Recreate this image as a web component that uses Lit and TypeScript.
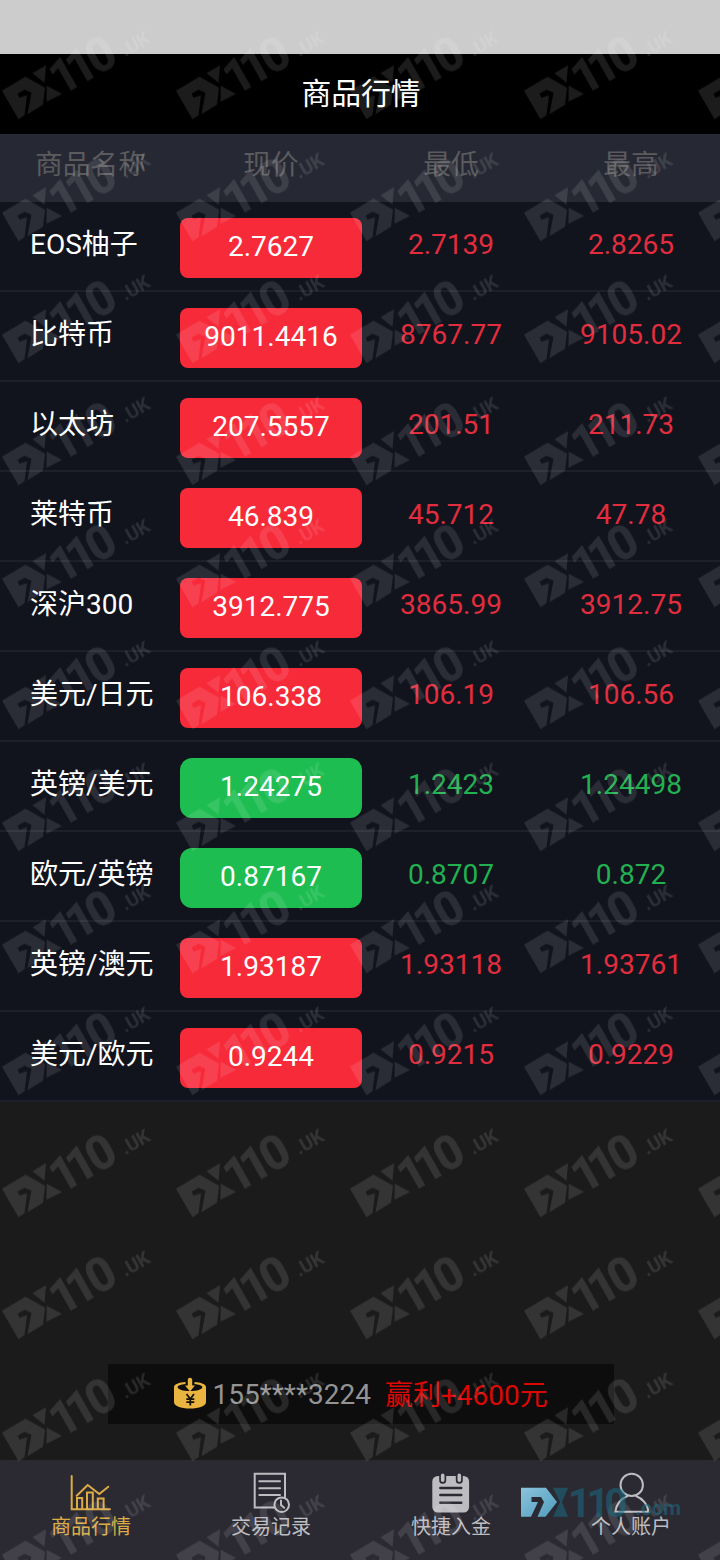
import { LitElement, html, svg, css } from "lit";
import { customElement } from "lit/decorators.js";
import { classMap } from "lit/directives/class-map.js";

type Quote = { name: string; price: string; low: string; high: string; rise: boolean };

const q = (name: string, price: string, low: string, high: string, rise = true): Quote => ({ name, price, low, high, rise });

const QUOTES: Quote[] = [
  q("EOS柚子", "2.7627", "2.7139", "2.8265"),
  q("比特币", "9011.4416", "8767.77", "9105.02"),
  q("以太坊", "207.5557", "201.51", "211.73"),
  q("莱特币", "46.839", "45.712", "47.78"),
  q("深沪300", "3912.775", "3865.99", "3912.75"),
  q("美元/日元", "106.338", "106.19", "106.56"),
  q("英镑/美元", "1.24275", "1.2423", "1.24498", false),
  q("欧元/英镑", "0.87167", "0.8707", "0.872", false),
  q("英镑/澳元", "1.93187", "1.93118", "1.93761"),
  q("美元/欧元", "0.9244", "0.9215", "0.9229"),
];

const chartIcon = svg`
  <path d="M1.7 4V37.3H40" />
  <path d="M6.7 23.7L17.7 13L29.3 22L38.3 14.7" />
  <path d="M7 37V25.9H12.2V37M17 37V20.5H22.8V37M27.8 37V26.5H33.6V37" />`;

const recordIcon = svg`
  <path d="M24.2 35.5H4.7V1.7H35V25" />
  <path d="M9.3 9.3H30M9.3 16.3H30M9.3 23H30" />
  <circle cx="31.7" cy="32.7" r="7.3" />
  <path d="M31 28.5V33L34.2 35.8" />`;

const depositIcon = svg`
  <rect class="solid" x="2.3" y="4" width="36.8" height="36.6" rx="5.5" />
  <path class="cut" stroke-width="7" d="M12.7 4V8.2M29.3 4V8.2" />
  <path class="ring" d="M12.7 3.4V8.2M29.3 3.4V8.2" />
  <path class="cut bars" d="M10.3 16H31.3M10.3 23H31.3M10.3 30.7H31.3" />`;

const personIcon = svg`
  <circle cx="21.7" cy="12.9" r="11.2" />
  <path d="M17.2 24.3C11 26.5 6 32.5 5.3 39.8H38.3C37.8 32.5 32.5 26.5 26.4 24.3" />`;

const TABS = [
  { label: "商品行情", icon: chartIcon },
  { label: "交易记录", icon: recordIcon },
  { label: "快捷入金", icon: depositIcon },
  { label: "个人账户", icon: personIcon },
];

@customElement("app-root")
export class AppRoot extends LitElement {
  static styles = css`
    :host {
      display: flex;
      flex-direction: column;
      position: relative;
      width: 720px;
      height: 1560px;
      overflow: hidden;
      background: #1b1b1b;
      color: #fff;
      font-family: Roboto, "Noto Sans CJK SC", sans-serif;
      font-size: 28px;
    }
    .status { height: 54px; background: #ccc; }
    .title {
      height: 80px;
      line-height: 79px;
      padding-left: 2px;
      box-sizing: border-box;
      background: #000;
      text-align: center;
      font-size: 29.8px;
    }
    .cols { display: grid; grid-template-columns: 180px 182px 178px 182px; text-align: center; }
    .head {
      height: 68px;
      line-height: 61px;
      background: #262833;
      color: #5b5b5e;
      font-size: 27.8px;
    }
    .head .first { padding-left: 1px; }
    .row {
      height: 90px;
      box-sizing: border-box;
      border-bottom: 2px solid #1d202a;
      background: #11131d;
      line-height: 86px;
    }
    .name { padding-left: 30px; text-align: left; white-space: nowrap; }
    .price {
      height: 60px;
      margin-top: 16px;
      border-radius: 8px;
      background: #f72a3a;
      line-height: 57px;
    }
    .fall .price { background: #1ebd51; border-radius: 12px; }
    .num { color: #e12d3d; }
    .fall .num { color: #22b151; }
    .space { flex: 1; }
    .notice {
      display: flex;
      align-items: center;
      box-sizing: border-box;
      width: 506px;
      height: 60px;
      margin: 0 0 36px 108px;
      padding-left: 65px;
      background: #0d0d0d;
      color: #949494;
      white-space: pre;
    }
    .notice svg { width: 34px; height: 34px; margin: 0 5.500px 3px 0; }
    .profit { margin: 0 0 2px 14px; color: #dc0805; }
    .tabs { display: grid; grid-template-columns: repeat(4, 1fr); height: 100px; background: #2b2a32; }
    .tab {
      display: flex;
      flex-direction: column;
      align-items: center;
      padding-top: 12px;
      color: #bdbdc1;
      font-size: 20px;
      line-height: 26px;
    }
    .tab.active { color: #dcab45; }
    .tab svg {
      width: 40px;
      height: 42px;
      overflow: visible;
      fill: none;
      stroke: currentColor;
      stroke-width: 2;
      stroke-linecap: round;
    }
    .tab span { padding-left: 2px; }
    .tab .solid { fill: currentColor; stroke: none; }
    .tab .ring { stroke-width: 3.6; }
    .tab .cut { stroke: #2b2a32; }
    .tab .bars { stroke-width: 2.4; }
    .marks { position: absolute; inset: 0; width: 720px; height: 1560px; pointer-events: none; }
  `;

  private watermark() {
    return html`<svg class="marks" viewBox="0 0 720 1560" aria-hidden="true">
      <defs>
        <pattern id="wm" width="174" height="122" y="21.7" patternUnits="userSpaceOnUse">
          <g fill="#fff" font-family="Roboto">
            <path fill-rule="evenodd" d="M2 69L25.5 55L45 66L43 83L27.5 92.5L31.5 71L24.5 68L17.5 72L19.5 76L27 73.5L24.5 93.5L18.5 97.5Z" />
            <path d="M32.5 51.5L46 43.5L44.5 61Z" />
            <path d="M46.7 64L62 72.3L46.5 80Z" />
            <g transform="translate(73 65.5) rotate(-29.6)">
              <text x="-15 4 26.5" y="1.5" font-size="47" font-weight="700" stroke="#fff" stroke-width="0.6" stroke-linejoin="round">110</text>
              <text x="60.5" y="-0.5" font-size="19" font-weight="700">.UK</text>
            </g>
          </g>
        </pattern>
        <linearGradient id="blue" x1="0" y1="0" x2="1" y2="1">
          <stop offset="0" stop-color="#8cc3dc" />
          <stop offset="1" stop-color="#4f9dbd" />
        </linearGradient>
      </defs>
      <rect width="720" height="1560" fill="url(#wm)" opacity="0.11" />
      <path fill="url(#blue)" d="M521 1487.7H546L557 1502L545.5 1516.7H537.5L544 1502L541 1497H531.5V1502H538L531 1516.7H521Z" />
      <g fill="#1b6b82" font-family="Roboto" font-weight="700" opacity="0.55">
        <path d="M553 1487.7H568L562 1502L568 1516.7H553L560 1502Z" />
        <text x="568 586.5 604.5" y="1516.5" font-size="40">110</text>
        <text x="635" y="1515" font-size="20.5">.com</text>
      </g>
    </svg>`;
  }

  render() {
    return html`
      <div class="status"></div>
      <div class="title">商品行情</div>
      <div class="cols head">
        <span class="first">商品名称</span><span>现价</span><span>最低</span><span>最高</span>
      </div>
      ${QUOTES.map(
        (r) => html`<div class=${classMap({ cols: true, row: true, fall: !r.rise })}>
          <span class="name">${r.name}</span>
          <span class="price">${r.price}</span>
          <span class="num">${r.low}</span>
          <span class="num">${r.high}</span>
        </div>`
      )}
      <div class="space"></div>
      <div class="notice">
        <svg viewBox="0 0 34 34">
          <path fill="#e9b440" d="M1 11C1 8.2 6 6.3 12.5 5.9V8C8 8.4 4.7 9.6 4.7 11.2C4.7 13.3 10 15 17 15S29.300 13.300 29.300 11.200C29.300 9.600 26 8.400 21.500 8V5.900C28 6.300 33 8.200 33 11V26C33 30 26.500 32.500 17 32.500S1 30 1 26Z" />
          <path fill="#e9b440" d="M14.800 3.800C14.800 1 19.200 1 19.200 3.800V9.500H22L17 15.500L12 9.500H14.800Z" />
          <path fill="none" stroke="#15120a" stroke-width="1.800" d="M13.500 18L17.300 23L21 18M17.300 23V29.500M13.300 23.200H21.300M13.300 26.200H21.300" />
        </svg><span>155****3224</span><span class="profit">赢利+4600元</span>
      </div>
      <div class="tabs">
        ${TABS.map(
          (t, i) => html`<div class=${classMap({ tab: true, active: i === 0 })}>
            <svg viewBox="0 0 40 42">${t.icon}</svg><span>${t.label}</span>
          </div>`
        )}
      </div>
      ${this.watermark()}
    `;
  }
}
